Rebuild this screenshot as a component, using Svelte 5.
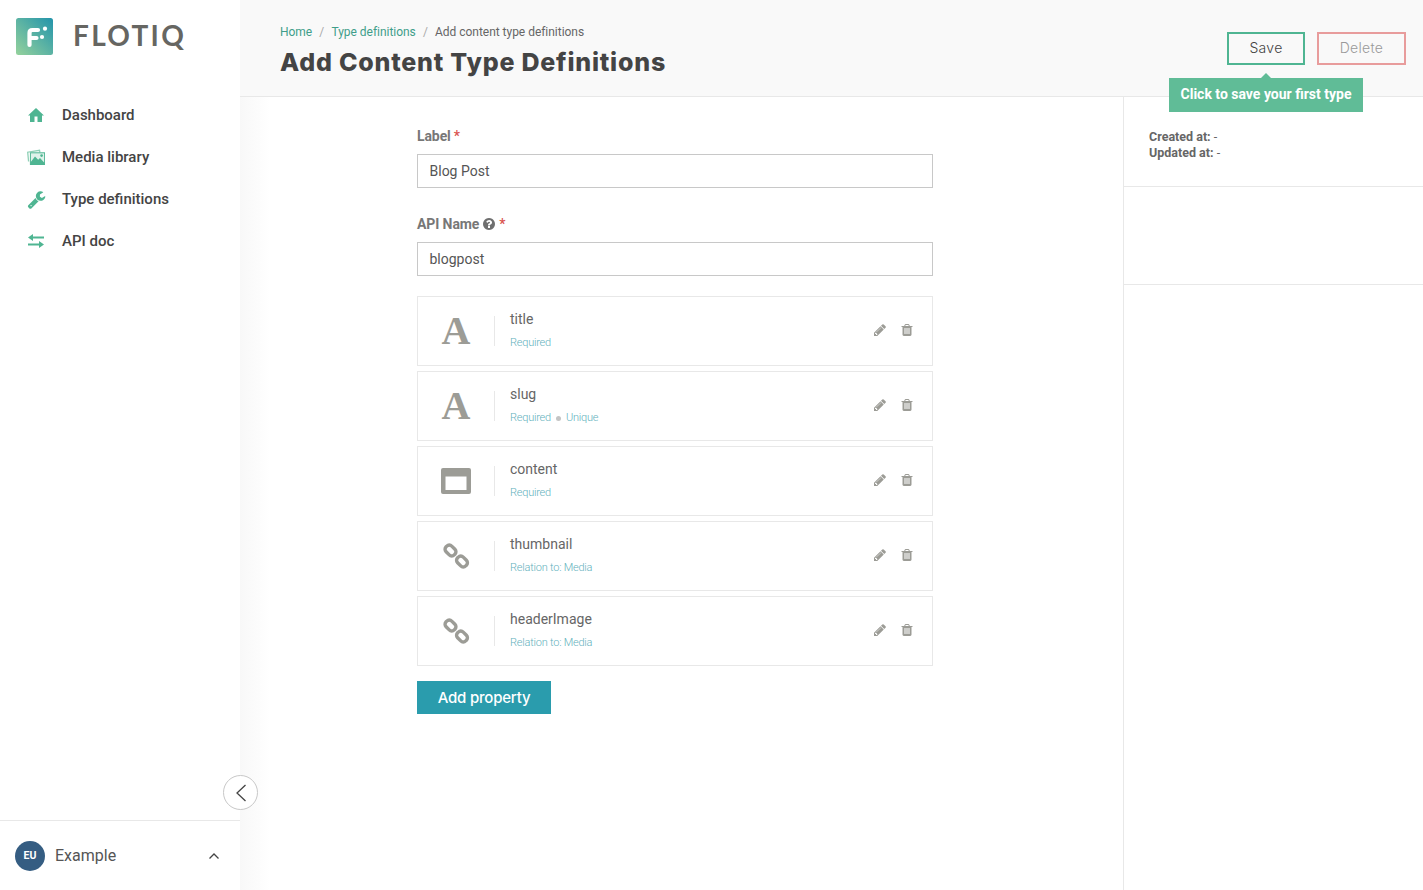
<script>
  const nav = [
    { label: 'Dashboard', icon: 'home' },
    { label: 'Media library', icon: 'media' },
    { label: 'Type definitions', icon: 'wrench' },
    { label: 'API doc', icon: 'exchange' }
  ];
  const props = [
    { name: 'title', kind: 'text', tags: ['Required'] },
    { name: 'slug', kind: 'text', tags: ['Required', 'Unique'] },
    { name: 'content', kind: 'rich', tags: ['Required'] },
    { name: 'thumbnail', kind: 'link', tags: ['Relation to: Media'] },
    { name: 'headerImage', kind: 'link', tags: ['Relation to: Media'] }
  ];
  const paths = {
    wrench: 'M448 1472q0-26-19-45t-45-19-45 19-19 45 19 45 45 19 45-19 19-45zm644-420l-682 682q-37 37-90 37-52 0-91-37l-106-108q-38-36-38-90 0-53 38-91l681-681q39 98 114.5 173.5t173.5 114.5zm634-435q0 39-23 106-47 134-164.5 217.5t-258.5 83.5q-185 0-316.5-131.5t-131.5-316.5 131.5-316.5 316.5-131.5q58 0 121.5 16.5t107.5 46.5q16 11 16 28t-16 28l-293 169v224l193 107q5-3 79-48.5t135.5-81 70.5-35.5q15 0 23.5 10t8.5 25z',
    pencil: 'M491 1536l91-91-235-235-91 91v107h128v128h107zm523-928q0-22-22-22-10 0-17 7l-542 542q-7 7-7 17 0 22 22 22 10 0 17-7l542-542q7-7 7-17zm-54-192l416 416-832 832h-416v-416zm683 96q0 53-37 90l-166 166-416-416 166-165q36-38 90-38 53 0 91 38l235 234q37 39 37 91z',
    trash: 'M704 1376v-704q0-14-9-23t-23-9h-64q-14 0-23 9t-9 23v704q0 14 9 23t23 9h64q14 0 23-9t9-23zm256 0v-704q0-14-9-23t-23-9h-64q-14 0-23 9t-9 23v704q0 14 9 23t23 9h64q14 0 23-9t9-23zm256 0v-704q0-14-9-23t-23-9h-64q-14 0-23 9t-9 23v704q0 14 9 23t23 9h64q14 0 23-9t9-23zm-544-992h448l-48-117q-7-9-17-11h-317q-10 2-17 11zm928 32v64q0 14-9 23t-23 9h-96v948q0 83-47 143.5t-113 60.5h-832q-66 0-113-58.5t-47-141.5v-952h-96q-14 0-23-9t-9-23v-64q0-14 9-23t23-9h309l70-167q15-37 54-63t79-26h320q40 0 79 26t54 63l70 167h309q14 0 23 9t9 23z',
    question: 'M1024 1376v-192q0-14-9-23t-23-9h-192q-14 0-23 9t-9 23v192q0 14 9 23t23 9h192q14 0 23-9t9-23zm256-672q0-88-55.5-163t-138.5-116-170-41q-243 0-371 213-15 24 8 42l132 100q7 6 19 6 16 0 25-12 53-68 86-92 34-24 86-24 48 0 85.5 26t37.5 59q0 38-20 61t-68 45q-63 28-115.5 86.5t-52.5 125.5v36q0 14 9 23t23 9h192q14 0 23-9t9-23q0-19 21.5-49.5t54.5-49.5q32-18 49-28.5t46-35 44.5-48 28-60.5 12.5-81zm384 192q0 209-103 385.5t-279.5 279.5-385.5 103-385.5-103-279.5-279.5-103-385.5 103-385.5 279.5-279.5 385.5-103 385.5 103 279.5 279.5 103 385.5z'
  };
</script>

<div class="page">
  <aside class="sidebar">
    <div class="brand">
      <svg class="mark" width="37" height="37" viewBox="0 0 37 37" aria-hidden="true">
        <defs>
          <linearGradient id="brandfill" x1="1" y1="0" x2="0" y2="1">
            <stop offset="0" stop-color="#2394ab" />
            <stop offset="1" stop-color="#95d29c" />
          </linearGradient>
        </defs>
        <rect width="37" height="37" rx="2.500" fill="url(#brandfill)" />
        <path d="M13.500 27V15q0-3 3-3H22M13.500 20H20.500" fill="none" stroke="#fff" stroke-width="4.200" stroke-linecap="round" />
        <circle cx="29" cy="10.700" r="2.100" fill="#fff" />
        <circle cx="26" cy="19" r="2.100" fill="#fff" />
      </svg>
      <span class="wordmark">FLOTIQ</span>
    </div>
    <nav class="nav">
      {#each nav as item}
        <div class="nav-item">
          <span class="nav-icon">
            {#if item.icon === 'home'}
              <svg width="16" height="14" viewBox="0 0 16 14" aria-hidden="true"><path d="M8 0L16 7.500H14V14H9.500V8.500H6.500V14H2V7.500H0z" fill="#4fb592" /></svg>
            {:else if item.icon === 'media'}
              <svg width="18" height="16" viewBox="0 0 18 16" aria-hidden="true">
                <path d="M1.600 12.500L0.700 3.200 12.500 1.300l.4 2" fill="none" stroke="#8fd0b6" stroke-width="1.300" />
                <rect x="3.400" y="3.800" width="14.200" height="11.700" fill="#dff2ea" stroke="#4fb592" stroke-width="1" />
                <path d="M3.400 15.500V13.500l4.600-6 3.200 3.300 1.800-1.700 4.600 5v1.400z" fill="#4fb592" />
                <circle cx="14.600" cy="6.600" r="1.300" fill="#4fb592" />
              </svg>
            {:else if item.icon === 'wrench'}
              <svg width="19" height="19" viewBox="0 0 1792 1792" aria-hidden="true"><path d={paths.wrench} fill="#4fb592" /></svg>
            {:else}
              <svg width="16" height="14" viewBox="0 0 16 14" aria-hidden="true">
                <path d="M5 0v2.400h11v2.200H5V7L0 3.500z" fill="#4fb592" />
                <path d="M11 7v2.400H0v2.200h11V14l5-3.500z" fill="#4fb592" />
              </svg>
            {/if}
          </span>
          <span>{item.label}</span>
        </div>
      {/each}
    </nav>
    <div class="account">
      <span class="avatar">EU</span>
      <span class="account-name">Example</span>
      <svg class="chev" width="12" height="8" viewBox="0 0 12 8" aria-hidden="true"><path d="M1.500 6.500L6 2l4.500 4.500" fill="none" stroke="#444" stroke-width="1.300" /></svg>
    </div>
    <button class="collapse" aria-label="Collapse">
      <svg width="12" height="18" viewBox="0 0 12 18" aria-hidden="true"><path d="M10.500 1L2 9l8.500 8" fill="none" stroke="#444" stroke-width="1.300" /></svg>
    </button>
  </aside>

  <div class="workspace">
    <header class="topbar">
      <div class="heading">
        <div class="crumbs">
          <span class="crumb-link">Home</span><span class="sep">/</span><span class="crumb-link">Type definitions</span><span class="sep">/</span><span>Add content type definitions</span>
        </div>
        <h1>Add Content Type Definitions</h1>
      </div>
      <div class="actions">
        <div class="save-wrap">
          <button class="btn save">Save</button>
          <div class="hint">Click to save your first type</div>
        </div>
        <button class="btn delete">Delete</button>
      </div>
    </header>

    <div class="body">
      <main class="main">
        <form class="form">
          <div class="field-label">Label <span class="star">*</span></div>
          <div class="input">Blog Post</div>
          <div class="field-label api">API Name
            <svg width="14" height="14" viewBox="0 0 1792 1792" aria-hidden="true"><path d={paths.question} fill="#6f6f6f" /></svg>
            <span class="star">*</span>
          </div>
          <div class="input">blogpost</div>

          <div class="props">
            {#each props as p}
              <div class="prop">
                <div class="prop-icon">
                  {#if p.kind === 'text'}
                    <span class="letter">A</span>
                  {:else if p.kind === 'rich'}
                    <svg width="30" height="26" viewBox="0 0 30 26" aria-hidden="true">
                      <path fill-rule="evenodd" d="M2 0h26a2 2 0 0 1 2 2v22a2 2 0 0 1-2 2H2a2 2 0 0 1-2-2V2a2 2 0 0 1 2-2zM4.500 8.500v13.500h21V8.500z" fill="#9c9c96" />
                    </svg>
                  {:else}
                    <svg class="link" width="30" height="30" viewBox="0 0 30 30" aria-hidden="true">
                      <g fill="none" stroke="#9c9c96" stroke-width="3.400">
                        <rect x="3.750" y="5.500" width="11.500" height="8" rx="3.500" transform="rotate(45 9.500 9.500)" />
                        <rect x="15.250" y="16.500" width="11.500" height="8" rx="3.500" transform="rotate(45 21 20.500)" />
                      </g>
                    </svg>
                  {/if}
                </div>
                <div class="prop-text">
                  <div class="prop-name">{p.name}</div>
                  <div class="prop-tags">
                    {#each p.tags as tag, i}
                      {#if i > 0}<span class="dot"></span>{/if}<span>{tag}</span>
                    {/each}
                  </div>
                </div>
                <div class="prop-actions">
                  <svg width="14" height="14" viewBox="0 0 1792 1792" aria-hidden="true"><path d={paths.pencil} fill="#9c9c96" /></svg>
                  <svg width="14" height="14" viewBox="0 0 1792 1792" aria-hidden="true"><path d={paths.trash} fill="#9c9c96" /></svg>
                </div>
              </div>
            {/each}
          </div>

          <button type="button" class="add">Add property</button>
        </form>
      </main>
      <aside class="meta">
        <section class="meta-dates">
          <div><b>Created at:</b> -</div>
          <div><b>Updated at:</b> -</div>
        </section>
        <section class="meta-empty"></section>
      </aside>
    </div>
  </div>
</div>

<style>
  :global(body) {
    margin: 0;
    background: #fff;
    overflow: hidden;
  }
  .page {
    display: flex;
    width: 1423px;
    height: 890px;
    font-family: Roboto, "Liberation Sans", sans-serif;
    color: #444;
  }
  .sidebar {
    position: relative;
    flex: 0 0 240px;
    display: flex;
    flex-direction: column;
    background: #fff;
    z-index: 2;
  }
  .brand {
    display: flex;
    align-items: center;
    height: 73px;
    padding: 0 0 0 16px;
  }
  .wordmark {
    margin-left: 20px;
    margin-bottom: 2px;
    font-family: Lato, "Open Sans", sans-serif;
    font-weight: 700;
    font-size: 28px;
    line-height: 37px;
    letter-spacing: 2.300px;
    color: #666662;
  }
  .nav {
    flex: 1;
    padding-top: 21px;
  }
  .nav-item {
    display: flex;
    align-items: center;
    height: 42px;
    font-size: 15px;
    font-weight: 500;
    color: #444;
  }
  .nav-icon {
    display: flex;
    justify-content: center;
    width: 38px;
    margin-left: 17px;
    margin-right: 7px;
  }
  .account {
    display: flex;
    align-items: center;
    height: 69px;
    padding: 0 20px 0 15px;
    border-top: 1px solid #e8e8e8;
  }
  .avatar {
    display: flex;
    align-items: center;
    justify-content: center;
    width: 30px;
    height: 30px;
    border-radius: 50%;
    background: #355d82;
    color: #fff;
    font-size: 10.500px;
    font-weight: 700;
  }
  .account-name {
    flex: 1;
    margin-left: 10px;
    font-size: 16px;
    color: #555;
  }
  .collapse {
    position: absolute;
    left: 223px;
    top: 775px;
    display: flex;
    align-items: center;
    justify-content: center;
    width: 35px;
    height: 35px;
    padding: 0;
    border: 1px solid #c8c8c8;
    border-radius: 50%;
    background: #fff;
  }
  .workspace {
    flex: 1;
    display: flex;
    flex-direction: column;
    min-width: 0;
  }
  .topbar {
    display: flex;
    justify-content: space-between;
    height: 96px;
    padding: 0 17px 0 40px;
    background: #f9f9f9;
    border-bottom: 1px solid #e8e8e8;
  }
  .crumbs {
    padding-top: 24px;
    font-size: 12px;
    line-height: 16px;
    letter-spacing: -0.030px;
    color: #666;
  }
  .crumb-link {
    color: #3f9e8a;
  }
  .sep {
    margin: 0 7.200px;
    color: #aaa;
  }
  h1 {
    margin: 5px 0 0;
    font-family: Inter, "Open Sans", sans-serif;
    font-size: 25px;
    line-height: 34px;
    font-weight: 800;
    letter-spacing: 0.780px;
    color: #444;
  }
  .actions {
    display: flex;
    gap: 12px;
    padding-top: 32px;
  }
  .save-wrap {
    position: relative;
  }
  .btn {
    height: 33px;
    padding: 0 0 2px;
    background: transparent;
    border: 2px solid;
    font-family: Inter, "Open Sans", sans-serif;
    font-size: 14px;
    font-weight: 300;
    letter-spacing: 0.300px;
  }
  .save {
    display: block;
    width: 78px;
    border-color: #4fb592;
    color: #444;
  }
  .delete {
    width: 89px;
    border-color: #e89c9c;
    color: #999;
  }
  .hint {
    position: absolute;
    left: -58px;
    top: 46px;
    width: 194px;
    height: 34px;
    background: #60bc97;
    color: #fff;
    font-size: 14px;
    font-weight: 700;
    line-height: 32px;
    text-align: center;
    white-space: nowrap;
    z-index: 3;
  }
  .hint::before {
    content: "";
    position: absolute;
    left: 92px;
    top: -5px;
    border-left: 5px solid transparent;
    border-right: 5px solid transparent;
    border-bottom: 5px solid #60bc97;
  }
  .body {
    flex: 1;
    display: flex;
    min-height: 0;
  }
  .main {
    flex: 1;
    padding: 29px 0 0 177px;
    background: linear-gradient(90deg, #f8f8f8 0, #fff 30px);
  }
  .form {
    width: 516px;
  }
  .field-label {
    display: flex;
    align-items: center;
    gap: 3px;
    height: 20px;
    margin-bottom: 8px;
    font-size: 14px;
    font-weight: 700;
    letter-spacing: -0.100px;
    color: #777;
  }
  .api {
    margin-top: 26px;
  }
  .star {
    color: #d9534f;
    font-weight: 500;
  }
  .input {
    box-sizing: border-box;
    height: 34px;
    padding: 0 11.500px;
    border: 1px solid #c8c8c8;
    font-size: 14px;
    line-height: 32px;
    color: #555;
    background: #fff;
  }
  .props {
    display: flex;
    flex-direction: column;
    gap: 5px;
    margin-top: 20px;
  }
  .prop {
    box-sizing: border-box;
    display: flex;
    align-items: center;
    height: 70px;
    border: 1px solid #e8e8e8;
    background: #fff;
  }
  .prop-icon {
    display: flex;
    align-items: center;
    justify-content: center;
    width: 76px;
    height: 30px;
    border-right: 1px solid #e8e8e8;
  }
  .link {
    flex: none;
  }
  .letter {
    font-family: "Liberation Serif", serif;
    font-weight: 700;
    font-size: 40px;
    line-height: 30px;
    color: #9c9c96;
  }
  .prop-text {
    flex: 1;
    padding: 0 0 2px 15px;
  }
  .prop-name {
    font-size: 14px;
    line-height: 20px;
    color: #666;
  }
  .prop-tags {
    display: flex;
    align-items: center;
    margin-top: 6px;
    font-size: 11px;
    font-weight: 300;
    line-height: 16px;
    letter-spacing: -0.220px;
    color: #5fb1bc;
  }
  .dot {
    width: 5px;
    height: 5px;
    margin: 1px 5px 0;
    border-radius: 50%;
    background: #c4c4c4;
  }
  .prop-actions {
    display: flex;
    gap: 14px;
    padding: 0 18px 2px 0;
  }
  .prop-actions svg:first-child {
    margin-right: -1px;
  }
  .add {
    display: block;
    width: 134px;
    height: 33px;
    margin-top: 15px;
    padding: 0;
    border: 0;
    background: #2a9cad;
    color: #fff;
    font-family: Inter, "Open Sans", sans-serif;
    font-size: 15px;
    font-weight: 500;
    letter-spacing: -0.200px;
  }
  .meta {
    flex: 0 0 299px;
    border-left: 1px solid #e8e8e8;
  }
  .meta-dates {
    box-sizing: border-box;
    height: 90px;
    padding: 32px 25px 0;
    border-bottom: 1px solid #e8e8e8;
    font-size: 12.500px;
    line-height: 16px;
    color: #666;
  }
  .meta-empty {
    height: 97px;
    border-bottom: 1px solid #e8e8e8;
  }
</style>
